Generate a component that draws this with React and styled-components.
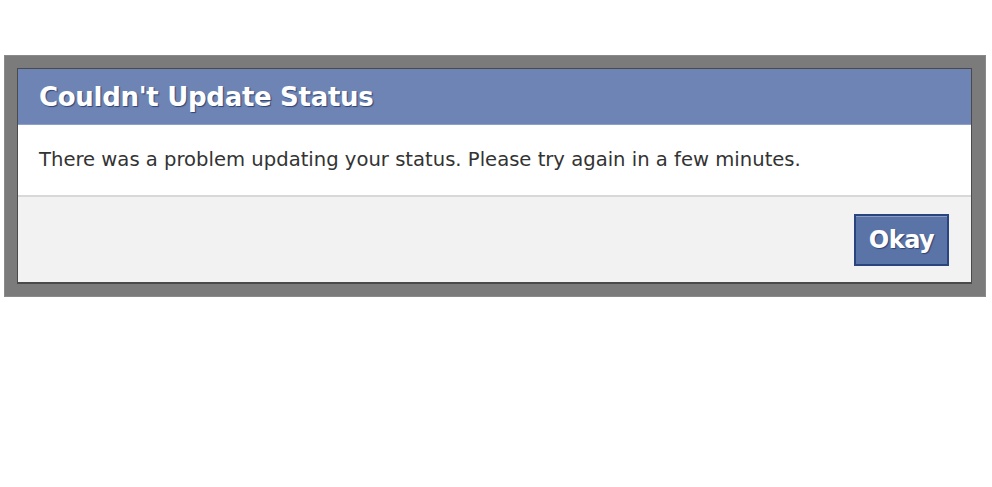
import React from "react";
import styled, { createGlobalStyle } from "styled-components";

const GlobalStyle = createGlobalStyle`
  html, body {
    margin: 0;
    padding: 0;
    background: #ffffff;
  }
`;

const Page = styled.div`
  width: 992px;
  height: 487px;
  padding: 55px 6px 0 4px;
  box-sizing: border-box;
`;

const Frame = styled.div`
  background: #7b7b7b;
  padding: 12px 13px 12px 12px;
  border: 1px solid #8a8a8a;
  box-sizing: border-box;
  width: 982px;
`;

const Dialog = styled.div`
  border: 1px solid #4a4a4a;
  border-bottom-width: 2px;
  background: #ffffff;
  display: flex;
  flex-direction: column;
`;

const Header = styled.div`
  height: 55px;
  background: #6d84b4;
  border-bottom: 1px solid #8fa0c8;
  display: flex;
  align-items: center;
  padding: 0 21px;
`;

const Title = styled.h2`
  margin: 0;
  font-family: "DejaVu Sans", Verdana, sans-serif;
  font-weight: bold;
  font-size: 26px;
  letter-spacing: -0.3px;
  color: #ffffff;
  text-shadow: 1px 1px 1px #2e4272;
`;

const Body = styled.div`
  height: 72px;
  box-sizing: border-box;
  display: flex;
  align-items: center;
  padding: 0 21px 1px;
  border-bottom: 2px solid #d8d8d8;
  font-family: "DejaVu Sans", Tahoma, sans-serif;
  font-size: 19.6px;
  color: #333333;
`;

const Footer = styled.div`
  height: 85px;
  box-sizing: border-box;
  background: #f2f2f2;
  display: flex;
  align-items: center;
  justify-content: flex-end;
  padding: 0 22px 0 0;
`;

const Button = styled.button`
  width: 95px;
  height: 52px;
  box-sizing: border-box;
  background: #5b74a8;
  border: 2px solid #29447e;
  color: #ffffff;
  font-family: "DejaVu Sans", Verdana, sans-serif;
  font-weight: bold;
  font-size: 24px;
  letter-spacing: -0.5px;
  text-shadow: 1px 1px 1px #2e4272;
  cursor: pointer;
  box-shadow: inset 0 1px 0 #8a9cc2;
`;

export default function App() {
  return (
    <>
      <GlobalStyle />
      <Page>
        <Frame>
          <Dialog>
            <Header>
              <Title>Couldn't Update Status</Title>
            </Header>
            <Body>
              There was a problem updating your status. Please try again in a few minutes.
            </Body>
            <Footer>
              <Button>Okay</Button>
            </Footer>
          </Dialog>
        </Frame>
      </Page>
    </>
  );
}
